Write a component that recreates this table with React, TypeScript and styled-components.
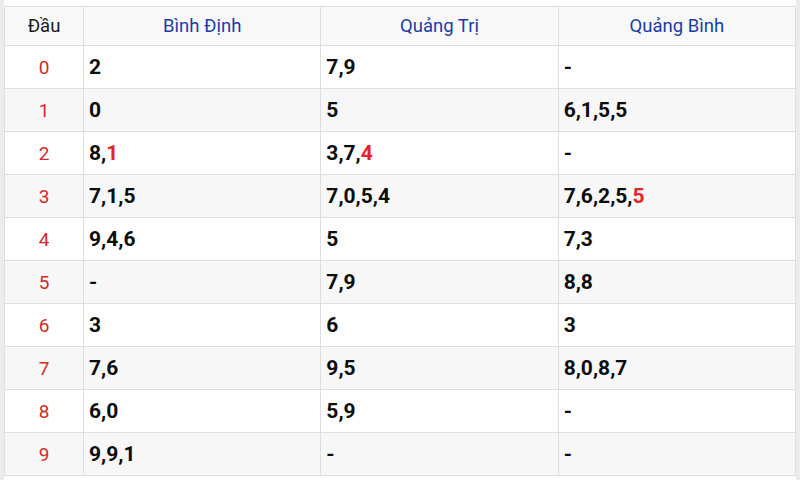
import React from "react";
import styled, { createGlobalStyle } from "styled-components";

const Global = createGlobalStyle`
  html, body { margin: 0; padding: 0; background: #ececec; }
  body { font-family: Roboto, "Liberation Sans", Arial, sans-serif; }
`;

const Page = styled.div`
  margin: 0 4px;
  padding-top: 6px;
  background: #ffffff;
  height: 474px;
`;

const Table = styled.table`
  width: 100%;
  border-collapse: collapse;
  table-layout: fixed;
  border: 1px solid #dedede;
`;

const HeadCell = styled.th<{ $blue?: boolean }>`
  height: 38px;
  padding: 0;
  background: #f8f8f8;
  border: 1px solid #dedede;
  font-weight: 400;
  font-size: 18.5px;
  color: ${(p) => (p.$blue ? "#1b3da6" : "#1a1a1a")};
  text-align: center;
  vertical-align: middle;
`;

const Row = styled.tr<{ $alt: boolean }>`
  background: ${(p) => (p.$alt ? "#f7f7f7" : "#ffffff")};
`;

const HeadNum = styled.td`
  height: 42px;
  padding: 0;
  border: 1px solid #dedede;
  text-align: center;
  color: #d42a2a;
  font-size: 19px;
  vertical-align: middle;
`;

const Cell = styled.td`
  padding: 0 0 0 5px;
  border: 1px solid #dedede;
  font-weight: 700;
  font-size: 21px;
  color: #0d0d0d;
  vertical-align: middle;
`;

const Hot = styled.span`
  color: #e3242b;
`;

type Val = { nums: string[]; hot?: boolean };

const data: { d: number; cols: Val[] }[] = [
  { d: 0, cols: [{ nums: ["2"] }, { nums: ["7", "9"] }, { nums: ["-"] }] },
  { d: 1, cols: [{ nums: ["0"] }, { nums: ["5"] }, { nums: ["6", "1", "5", "5"] }] },
  { d: 2, cols: [{ nums: ["8", "1"], hot: true }, { nums: ["3", "7", "4"], hot: true }, { nums: ["-"] }] },
  { d: 3, cols: [{ nums: ["7", "1", "5"] }, { nums: ["7", "0", "5", "4"] }, { nums: ["7", "6", "2", "5", "5"], hot: true }] },
  { d: 4, cols: [{ nums: ["9", "4", "6"] }, { nums: ["5"] }, { nums: ["7", "3"] }] },
  { d: 5, cols: [{ nums: ["-"] }, { nums: ["7", "9"] }, { nums: ["8", "8"] }] },
  { d: 6, cols: [{ nums: ["3"] }, { nums: ["6"] }, { nums: ["3"] }] },
  { d: 7, cols: [{ nums: ["7", "6"] }, { nums: ["9", "5"] }, { nums: ["8", "0", "8", "7"] }] },
  { d: 8, cols: [{ nums: ["6", "0"] }, { nums: ["5", "9"] }, { nums: ["-"] }] },
  { d: 9, cols: [{ nums: ["9", "9", "1"] }, { nums: ["-"] }, { nums: ["-"] }] },
];

function renderVal(v: Val) {
  if (!v.hot) return v.nums.join(",");
  const head = v.nums.slice(0, -1).join(",");
  return (
    <>
      {head},<Hot>{v.nums[v.nums.length - 1]}</Hot>
    </>
  );
}

export default function App() {
  return (
    <>
      <Global />
      <Page>
        <Table>
          <colgroup>
            <col style={{ width: "79px" }} />
            <col />
            <col />
            <col />
          </colgroup>
          <thead>
            <tr>
              <HeadCell>Đầu</HeadCell>
              <HeadCell $blue>Bình Định</HeadCell>
              <HeadCell $blue>Quảng Trị</HeadCell>
              <HeadCell $blue>Quảng Bình</HeadCell>
            </tr>
          </thead>
          <tbody>
            {data.map((r) => (
              <Row key={r.d} $alt={r.d % 2 === 1}>
                <HeadNum>{r.d}</HeadNum>
                {r.cols.map((c, i) => (
                  <Cell key={i}>{renderVal(c)}</Cell>
                ))}
              </Row>
            ))}
          </tbody>
        </Table>
      </Page>
    </>
  );
}
